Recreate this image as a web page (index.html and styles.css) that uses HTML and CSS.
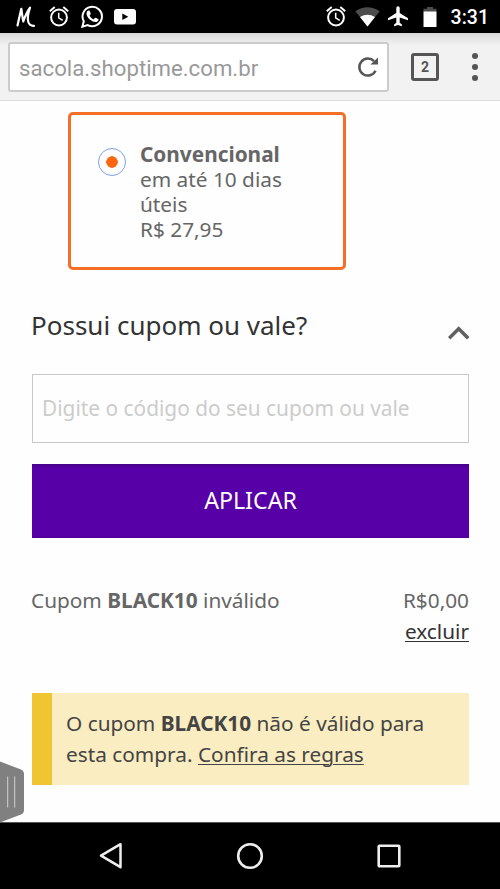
FILE: index.html
```html
<!DOCTYPE html>
<html lang="pt-BR">
<head>
<meta charset="utf-8">
<title>Sacola</title>
<link rel="stylesheet" href="styles.css">
</head>
<body>
<header class="status">
  <div class="status-left">
    <svg class="i-m" width="20" height="22" viewBox="0 0 20 22" fill="none" stroke="#fff" stroke-width="2.2" stroke-linecap="round" stroke-linejoin="round"><path d="M1.500 19.500C3 13 4 8 5.300 2.800C6 7 6.500 12 7.300 15.500C9.200 10 11.500 5 14 1.700C12.200 7 11 12 12.300 16C13.300 19 15 20 18 19.800"/></svg>
    <svg class="i-alarm" width="20" height="21" viewBox="0 0 20 21" fill="none" stroke="#fff" stroke-width="2"><circle cx="10" cy="11.500" r="7.900"/><path d="M.8 5.200L5.700 1.100M19.200 5.200L14.300 1.100"/><path d="M9.700 6.800v5l4 2.500" stroke-width="1.500"/></svg>
    <svg class="i-wa" width="23" height="23" viewBox="0 0 23 23"><path d="M1.300 21.700L2.800 16.300A9.700 9.700 0 1 1 6.700 20.100Z" fill="none" stroke="#fff" stroke-width="2"/><path d="M7.500 5.600c-.8 0-2 1.200-2 3 0 3.900 5 8.500 9 8.500 1.700 0 3-1.200 3.100-2.600 0-.5-3-2-3.400-1.800-.6.300-1 1.500-1.500 1.500-1 0-4-2.700-4-3.800 0-.4.900-1 1-1.500.1-.3-1-3.100-1.300-3.300z" fill="#fff"/></svg>
    <svg width="22" height="16" viewBox="0 0 22 16"><rect width="22" height="15.500" rx="3" fill="#fff"/><path d="M8.300 4.500v6.500l6-3.250z" fill="#000"/></svg>
  </div>
  <div class="status-right">
    <svg width="20" height="21" viewBox="0 0 20 21" fill="none" stroke="#fff" stroke-width="2"><circle cx="10" cy="11.500" r="7.900"/><path d="M.8 5.200L5.700 1.100M19.200 5.200L14.300 1.100"/><path d="M9.700 6.800v5l4 2.500" stroke-width="1.500"/></svg>
    <svg class="i-wifi" width="25" height="20" viewBox="0 0 25 20"><path d="M.3 4.200Q12.500-3.600 24.700 4.200L12.500 19.500Z" fill="#4c4c4c"/><path d="M5 10Q12.500 5.700 20 10L12.500 19.500Z" fill="#fff"/></svg>
    <svg class="i-plane" width="20" height="21" viewBox="0 0 20 21"><path d="M20 14.200v-2L11.700 7V2a1.700 1.700 0 0 0-3.400 0v5L0 12.200v2l8.300-2.600v5.200L6.100 18.500v1.700l3.900-1.100 3.900 1.100v-1.700l-2.200-1.700v-5.200z" fill="#fff"/></svg>
    <svg class="i-bat" width="14" height="20" viewBox="0 0 14 20"><path d="M.5 1.800H4V0h6v1.800h3.500V5H.5z" fill="#4c4c4c"/><path d="M.5 4.500h13V20H.5z" fill="#fff"/></svg>
    <span class="clock">3:31</span>
  </div>
</header>
<div class="toolbar">
  <div class="address">
    <span>sacola.shoptime.com.br</span>
    <svg width="22" height="22" viewBox="0 0 22 22"><path d="M18.500 14.800A8.500 8.500 0 1 1 17 5.200" fill="none" stroke="#555" stroke-width="2.500"/><path d="M21 1.500V8.500H13.400Z" fill="#555"/></svg>
  </div>
  <div class="tabs">2</div>
  <div class="dots"><i></i><i></i><i></i></div>
</div>
<main class="page">
  <section class="shipping">
    <span class="radio"></span>
    <div><b>Convencional</b><br>em até 10 dias<br>úteis<br>R$ 27,95</div>
  </section>
  <section class="coupon">
    <div class="coupon-head">
      <h1>Possui cupom ou vale?</h1>
      <svg width="22" height="14" viewBox="0 0 22 14" fill="none" stroke="#606060" stroke-width="3.400"><path d="M2.200 12.200L11.700 2.700L21.200 12.200"/></svg>
    </div>
    <div class="field">Digite o código do seu cupom ou vale</div>
    <div class="apply">APLICAR</div>
    <div class="result">
      <div>Cupom <b>BLACK10</b> inválido</div>
      <div class="amount">R$0,00<br><a>excluir</a></div>
    </div>
    <div class="alert">O cupom <b>BLACK10</b> não é válido para<br>esta compra. <a>Confira as regras</a></div>
  </section>
</main>
<nav class="nav">
  <svg width="24" height="28" viewBox="0 0 24 28"><path d="M21.500 2.200V25.200L2 13.700Z" fill="none" stroke="#eee" stroke-width="2.500" stroke-linejoin="round"/></svg>
  <svg width="28" height="28" viewBox="0 0 28 28"><circle cx="14" cy="14" r="11.800" fill="none" stroke="#eee" stroke-width="2.600"/></svg>
  <svg width="24" height="24" viewBox="0 0 24 24"><rect x="1.700" y="1.700" width="20.600" height="20.600" rx=".8" fill="none" stroke="#eee" stroke-width="2.600"/></svg>
</nav>
<svg class="handle" width="24" height="62" viewBox="0 0 24 62"><path d="M0 .5L21 8.500Q24 10 24 13V49Q24 52 21 53.500L0 61.500Z" fill="#808080"/><path d="M7.700 15.500V46.500M14.700 15.500V46.500" stroke="#d0d0d0" stroke-width="1"/></svg>
</body>
</html>
```
FILE: styles.css
```css
* { box-sizing: border-box; }
body {
  margin: 0;
  width: 500px;
  height: 889px;
  overflow: hidden;
  position: relative;
  display: flex;
  flex-direction: column;
  background: #fefefe;
  font-family: "Noto Sans", sans-serif;
  color: #666;
}
svg { display: block; flex: none; }
.status {
  height: 33px;
  flex: none;
  background: #000;
  display: flex;
  justify-content: space-between;
  align-items: center;
  padding: 0 12px 0 16px;
}
.status-left, .status-right { display: flex; align-items: center; }
.i-alarm { margin: 0 12px 0 13px; }
.i-wa { margin-right: 10px; }
.i-wifi { margin-left: 9px; }
.i-plane { margin-left: 8px; }
.i-bat { margin: 0 14px 0 15px; }
.status-right { margin-right: -1px; }
.clock {
  font: 500 19.5px/33px Roboto, sans-serif;
  color: #fff;
  padding-top: 2px;
}
.toolbar {
  height: 68px;
  flex: none;
  display: flex;
  align-items: center;
  padding: 0 20px 0 8px;
  background: linear-gradient(#d8d8d8, #f2f2f2 12px);
  border-bottom: 1px solid #ddd;
}
.address {
  width: 381px;
  height: 50px;
  display: flex;
  align-items: center;
  justify-content: space-between;
  padding: 0 8px 0 9px;
  background: #fff;
  border: 2px solid #ccc;
  border-radius: 3px;
  font: 22.2px/46px Roboto, sans-serif;
  color: #999;
}
.address span { padding-top: 2px; }
.tabs {
  width: 28px;
  height: 28px;
  margin-left: 22px;
  border: 3px solid #555;
  border-radius: 3px;
  font: bold 14px/22px Roboto, sans-serif;
  text-align: center;
  color: #555;
}
.dots { margin-left: 33px; display: grid; gap: 5px; }
.dots i { width: 6px; height: 6px; border-radius: 50%; background: #555; }
.page { flex: 1; padding: 11px 31px 0 32px; }
.shipping {
  width: 278px;
  height: 158px;
  margin-left: 36px;
  border: 3px solid #f56f26;
  border-radius: 5px;
  display: flex;
  padding: 27px 0 0 27px;
  font-size: 20.8px;
  line-height: 25px;
}
.radio {
  width: 28px;
  height: 28px;
  margin: 6px 14px 0 0;
  border: 1.5px solid #7f9fe6;
  border-radius: 50%;
  background: radial-gradient(circle, #ff6810 5.5px, #fff 6px);
}
.coupon-head {
  height: 104px;
  display: flex;
  justify-content: space-between;
  padding-top: 36px;
}
.coupon-head svg { margin-top: 20px; }
h1 { margin: 0 0 0 -1px; font-size: 26px; font-weight: 400; line-height: 38px; color: #333; }
.field {
  height: 69px;
  border: 1px solid #c8c8c8;
  padding-left: 9px;
  font-size: 20.85px;
  line-height: 66px;
  color: #ccc;
}
.apply {
  height: 74px;
  margin-top: 21px;
  background: #5800a8;
  border-top: 3px solid #4c0090;
  border-bottom: 1px solid #4c0090;
  text-align: center;
  font-size: 23.2px;
  line-height: 67px;
  color: #fff;
}
.result {
  display: flex;
  justify-content: space-between;
  margin: 47px 0 0 -1px;
  font-size: 20.8px;
  line-height: 31px;
}
.amount { text-align: right; }
a { text-decoration: underline; text-decoration-thickness: 1px; text-underline-offset: 2px; color: #333; }
.alert {
  height: 92px;
  margin-top: 46px;
  padding: 15px 0 0 14px;
  border-left: 20px solid #efc632;
  background: #faedc1;
  font-size: 20.8px;
  line-height: 30.5px;
  color: #444;
}
.alert a { color: #444; }
.nav {
  height: 67px;
  flex: none;
  background: #000;
  border-top: 1px solid #555;
  display: flex;
  align-items: center;
  justify-content: space-between;
  padding: 0 99px;
}
.handle { position: absolute; left: 0; top: 761px; }
```
